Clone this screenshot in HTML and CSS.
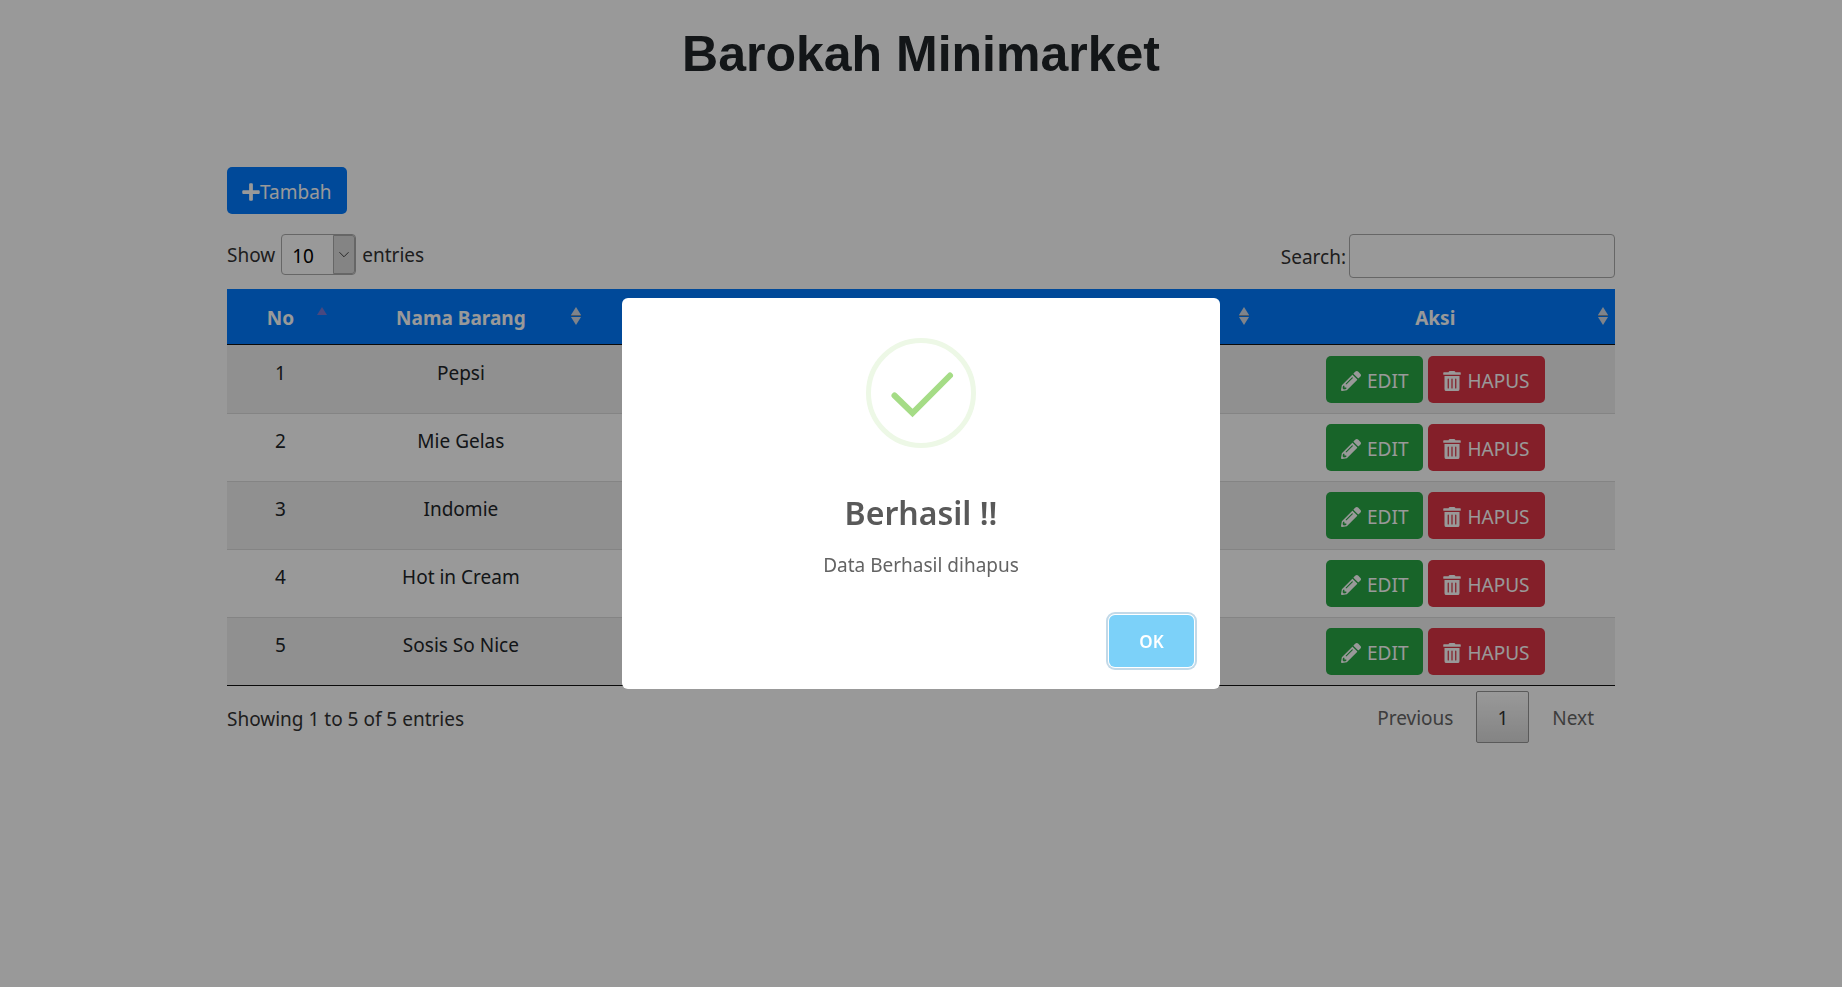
FILE: index.html
```html
<!DOCTYPE html>
<html lang="id">
<head>
<meta charset="utf-8">
<title>Barokah Minimarket</title>
<link rel="stylesheet" href="styles.css">
</head>
<body>
<svg class="sprite" aria-hidden="true">
  <symbol id="plus" viewBox="0 0 448 512"><path d="M416 208H272V64c0-17.67-14.33-32-32-32h-32c-17.67 0-32 14.33-32 32v144H32c-17.67 0-32 14.33-32 32v32c0 17.67 14.33 32 32 32h144v144c0 17.67 14.33 32 32 32h32c17.67 0 32-14.33 32-32V304h144c17.67 0 32-14.33 32-32v-32c0-17.67-14.33-32-32-32z"/></symbol>
  <symbol id="pencil" viewBox="0 0 512 512"><path d="M497.9 142.1l-46.1 46.1c-4.7 4.7-12.3 4.7-17 0l-111-111c-4.7-4.7-4.7-12.3 0-17l46.1-46.1c18.7-18.7 49.1-18.7 67.9 0l60.1 60.1c18.8 18.7 18.8 49.1 0 67.9zM284.2 99.8L21.6 362.4.4 483.9c-2.9 16.4 11.4 30.6 27.8 27.8l121.5-21.3 262.6-262.6c4.7-4.7 4.7-12.3 0-17l-111-111c-4.8-4.7-12.4-4.7-17.1 0zM124.1 339.9c-5.5-5.5-5.5-14.3 0-19.8l154-154c5.5-5.5 14.3-5.5 19.8 0s5.5 14.3 0 19.8l-154 154c-5.5 5.5-14.3 5.5-19.8 0zM88 424h48v36.3l-64.5 11.3-31.1-31.1L51.7 376H88v48z"/></symbol>
  <symbol id="trash" viewBox="0 0 448 512"><path d="M32 464a48 48 0 0 0 48 48h288a48 48 0 0 0 48-48V128H32zm272-256a16 16 0 0 1 32 0v224a16 16 0 0 1-32 0zm-96 0a16 16 0 0 1 32 0v224a16 16 0 0 1-32 0zm-96 0a16 16 0 0 1 32 0v224a16 16 0 0 1-32 0zM432 32H312l-9.4-18.7A24 24 0 0 0 281.1 0H166.8a23.72 23.72 0 0 0-21.4 13.3L136 32H16A16 16 0 0 0 0 48v32a16 16 0 0 0 16 16h416a16 16 0 0 0 16-16V48a16 16 0 0 0-16-16z"/></symbol>
  <symbol id="sort" viewBox="0 0 12 20"><path d="M6 1l5 8H1zM6 19l5-8H1z" fill="#d4dbe6"/><path d="M1 9.500h10" stroke="#8c939c"/></symbol>
  <symbol id="sort-up" viewBox="0 0 12 20"><path d="M6 1l5 8H1z" fill="#7a78d4"/></symbol>
</svg>

<main class="container">
  <h1 class="title">Barokah Minimarket</h1>

  <button type="button" class="btn btn-primary"><svg class="icon icon-narrow"><use href="#plus"/></svg>Tambah</button>

  <div class="controls">
    <div class="length">
      <label for="length">Show</label>
      <span class="select">
        <select id="length"><option>10</option><option>25</option><option>50</option></select>
        <svg class="chevron" viewBox="0 0 22 39" aria-hidden="true"><path d="M6 17l5 5 5-5" fill="none" stroke="#333"/></svg>
      </span>
      <span>entries</span>
    </div>
    <div class="filter">
      <label for="search">Search:</label>
      <input id="search" type="search">
    </div>
  </div>

  <table class="table">
    <colgroup><col class="col-no"><col class="col-name"><col class="col-detail"><col class="col-action"></colgroup>
    <thead>
      <tr>
        <th>No<svg class="sort"><use href="#sort-up"/></svg></th>
        <th>Nama Barang<svg class="sort"><use href="#sort"/></svg></th>
        <th><svg class="sort"><use href="#sort"/></svg></th>
        <th>Aksi<svg class="sort"><use href="#sort"/></svg></th>
      </tr>
    </thead>
    <tbody>
      <tr><td>1</td><td>Pepsi</td><td></td><td class="cell-actions"><div class="actions"><button type="button" class="btn btn-success"><svg class="icon"><use href="#pencil"/></svg> <span>EDIT</span></button><button type="button" class="btn btn-danger"><svg class="icon icon-narrow"><use href="#trash"/></svg> <span>HAPUS</span></button></div></td></tr>
      <tr><td>2</td><td>Mie Gelas</td><td></td><td class="cell-actions"><div class="actions"><button type="button" class="btn btn-success"><svg class="icon"><use href="#pencil"/></svg> <span>EDIT</span></button><button type="button" class="btn btn-danger"><svg class="icon icon-narrow"><use href="#trash"/></svg> <span>HAPUS</span></button></div></td></tr>
      <tr><td>3</td><td>Indomie</td><td></td><td class="cell-actions"><div class="actions"><button type="button" class="btn btn-success"><svg class="icon"><use href="#pencil"/></svg> <span>EDIT</span></button><button type="button" class="btn btn-danger"><svg class="icon icon-narrow"><use href="#trash"/></svg> <span>HAPUS</span></button></div></td></tr>
      <tr><td>4</td><td>Hot in Cream</td><td></td><td class="cell-actions"><div class="actions"><button type="button" class="btn btn-success"><svg class="icon"><use href="#pencil"/></svg> <span>EDIT</span></button><button type="button" class="btn btn-danger"><svg class="icon icon-narrow"><use href="#trash"/></svg> <span>HAPUS</span></button></div></td></tr>
      <tr><td>5</td><td>Sosis So Nice</td><td></td><td class="cell-actions"><div class="actions"><button type="button" class="btn btn-success"><svg class="icon"><use href="#pencil"/></svg> <span>EDIT</span></button><button type="button" class="btn btn-danger"><svg class="icon icon-narrow"><use href="#trash"/></svg> <span>HAPUS</span></button></div></td></tr>
    </tbody>
  </table>

  <div class="footer">
    <div class="info">Showing 1 to 5 of 5 entries</div>
    <nav class="pages" aria-label="Pagination">
      <a class="page" href="#">Previous</a>
      <a class="page page-current" href="#">1</a>
      <a class="page" href="#">Next</a>
    </nav>
  </div>
</main>

<div class="overlay">
  <div class="modal" role="dialog" aria-modal="true" aria-labelledby="modal-title">
    <svg class="modal-icon" viewBox="0 0 110 110" aria-hidden="true">
      <circle cx="55" cy="55" r="52.500" fill="none" stroke="#edf8e6" stroke-width="5"/>
      <path d="M28.500 57.500L46.500 75L84 37.500" fill="none" stroke="#a5dc86" stroke-width="6" stroke-linecap="round"/>
    </svg>
    <h2 class="modal-title" id="modal-title">Berhasil !!</h2>
    <p class="modal-text">Data Berhasil dihapus</p>
    <div class="modal-footer"><button type="button" class="modal-ok">OK</button></div>
  </div>
</div>
</body>
</html>
```
FILE: styles.css
```css
* { box-sizing: border-box; }

body {
  margin: 0;
  background: #fff;
  color: #212529;
  font: 19px/30px "Segoe UI", "Noto Sans", sans-serif;
}

button, input, select { font: inherit; color: inherit; }
.sprite { display: none; }

.container {
  max-width: 1426px;
  margin: 0 auto;
  padding: 24px 19px;
}

.title {
  margin: 0 0 83px;
  text-align: center;
  font: bold 50px/60px Arial, "Liberation Sans", sans-serif;
}

.btn {
  display: inline-flex;
  align-items: center;
  height: 47px;
  padding: 2px 15px 0;
  border: 0;
  border-radius: 5px;
  color: #fff;
}
.btn-primary { background: #007bff; }
.btn-success { gap: 6px; background: #28a745; }
.btn-danger { gap: 6px; background: #dc3545; }
.icon { flex: none; width: 20px; height: 20px; fill: #fff; }
.icon-narrow { width: 18px; }

.controls {
  display: flex;
  justify-content: space-between;
  align-items: flex-start;
  margin: 20px 0 11px;
  color: #333;
}
.controls label, .controls span { padding-top: 1px; }
.length { display: flex; align-items: center; gap: 6px; }
.length .select { position: relative; display: flex; padding: 0; }
.select select {
  appearance: none;
  width: 75px;
  height: 41px;
  padding: 2px 10px 0;
  border: 1px solid #aaa;
  border-radius: 4px;
  background: #fff;
  color: #000;
}
.chevron {
  position: absolute;
  top: 1px;
  right: 1px;
  width: 22px;
  height: 39px;
  border: 1px solid #aaa;
  border-radius: 0 3px 3px 0;
  background: #ddd;
  pointer-events: none;
}
.filter { display: flex; align-items: center; gap: 3px; }
.filter input {
  width: 266px;
  height: 44px;
  padding: 6px;
  border: 1px solid #aaa;
  border-radius: 4px;
  background: transparent;
}

.table {
  width: 100%;
  table-layout: fixed;
  border-collapse: separate;
  border-spacing: 0;
  border-bottom: 1px solid #111;
  text-align: center;
}
.col-no { width: 7.7%; }
.col-name { width: 18.3%; }
.col-detail { width: 48.1%; }
.table th {
  position: relative;
  height: 56px;
  padding: 2px 10px 0;
  border-bottom: 1px solid #111;
  background: #007bff;
  color: #fff;
}
.sort {
  position: absolute;
  top: 17px;
  right: 6px;
  width: 12px;
  height: 20px;
}
.table td {
  height: 68px;
  padding: 12px 10px 0;
  border-top: 1px solid #ddd;
  vertical-align: top;
}
.table tbody tr:first-child td { border-top-color: transparent; }
.table .cell-actions { padding-top: 10px; }
.table tbody tr:nth-child(odd) { background: #f0f0f0; }
.actions { display: flex; justify-content: center; gap: 5px; }

.footer {
  display: flex;
  justify-content: space-between;
  align-items: flex-start;
  padding-top: 5px;
  color: #333;
}
.info { padding-top: 13px; }
.pages { display: flex; gap: 2px; }
.page {
  padding: 11px 20px 9px;
  border: 1px solid transparent;
  border-radius: 2px;
  color: #666;
  text-decoration: none;
}
.page-current {
  border-color: #979797;
  background: linear-gradient(#fff, #dcdcdc);
  color: #333;
}

.overlay {
  position: fixed;
  inset: 0;
  display: flex;
  align-items: center;
  justify-content: center;
  background: rgba(0, 0, 0, 0.4);
}
.modal {
  display: flex;
  flex-direction: column;
  width: 598px;
  max-width: 90%;
  border-radius: 6px;
  background: #fff;
  text-align: center;
}
.modal-icon { width: 110px; height: 110px; margin: 40px auto 44px; }
.modal-title {
  margin: 0;
  color: #595959;
  font-size: 32px;
  font-weight: 600;
  line-height: 42px;
}
.modal-text { margin: 16px 0 0; color: #636363; }
.modal-footer { margin-top: 18px; padding: 17px 26px 22px; text-align: right; }
.modal-ok {
  width: 85px;
  height: 52px;
  padding: 2px 0 0;
  border: 0;
  border-radius: 6px;
  background: #7cd1f9;
  box-shadow: 0 0 0 1px #fff, 0 0 0 3px #c2d9e8;
  color: #fff;
  font-size: 17px;
  font-weight: 600;
}
```
